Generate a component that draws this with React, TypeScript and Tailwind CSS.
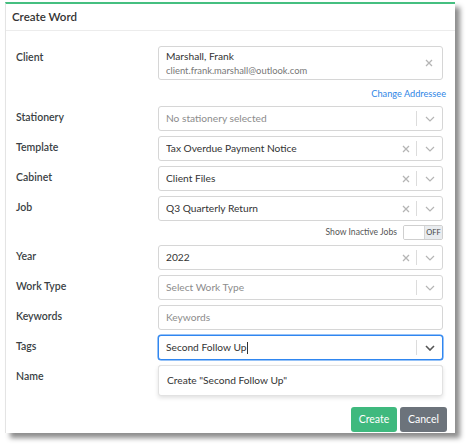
import React from 'react';

const font = "font-['Lato','Noto_Sans',sans-serif]";

function Clear() {
  return (
    <svg width="8" height="8" viewBox="0 0 8 8" className="shrink-0">
      <path d="M1 1 L7 7 M7 1 L1 7" stroke="#b5b5b5" strokeWidth="1.3" />
    </svg>
  );
}

function Chevron({ dark }: { dark?: boolean }) {
  return (
    <svg width="10" height="6" viewBox="0 0 10 6" className="shrink-0">
      <path d="M1 1 L5 5 L9 1" fill="none" stroke={dark ? '#555' : '#b5b5b5'} strokeWidth={dark ? 1.6 : 1.2} />
    </svg>
  );
}

function Select({ value, placeholder, clear = true, focused }: { value?: string; placeholder?: string; clear?: boolean; focused?: boolean }) {
  return (
    <div
      className={
        'h-[25px] flex items-center rounded-[3px] bg-white pl-[7px] ' +
        (focused ? 'border border-[#2f86f0] shadow-[0_0_0_0.5px_#2f86f0]' : 'border border-[#d6d6d6]')
      }
    >
      <div className={'flex-1 text-[10.2px] truncate ' + (value ? 'text-[#333]' : 'text-[#8c8c8c]')}>
        {value ?? placeholder}
        {focused && <span className="inline-block w-px h-[12px] bg-[#333] align-middle ml-px" />}
      </div>
      {clear && value && !focused && (
        <div className="w-[20px] flex justify-center">
          <Clear />
        </div>
      )}
      <div className="w-px h-[15px] bg-[#dcdcdc]" />
      <div className="w-[25px] flex justify-center">
        <Chevron dark={focused} />
      </div>
    </div>
  );
}

function Row({ label, children, className = '' }: { label: string; children: React.ReactNode; className?: string }) {
  return (
    <div className={'flex ' + className}>
      <div className="w-[142px] pt-[4px] text-[10.5px] font-semibold text-[#3a3f44]">{label}</div>
      <div className="flex-1 relative">{children}</div>
    </div>
  );
}

export default function App() {
  return (
    <div className={'w-[466px] h-[444px] bg-white overflow-hidden ' + font}>
      <div className="ml-[5px] mt-[2px] w-[450px] h-[431px] bg-white border-t-2 border-[#45bf80] border-l border-l-[#e4e4e4] shadow-[5px_5px_5px_rgba(0,0,0,0.45)] flex flex-col">
        <div className="h-[27px] flex items-center px-[6px] border-b border-[#ececec] text-[11.5px] font-semibold text-[#333]">
          Create Word
        </div>
        <div className="pl-[10px] pr-[12px] pt-[15px] flex flex-col">
          <Row label="Client">
            <div className="h-[34px] flex items-center rounded-[3px] border border-[#d6d6d6] pl-[7px]">
              <div className="flex-1 leading-none">
                <div className="text-[10.2px] text-[#333]">Marshall, Frank</div>
                <div className="text-[9.4px] text-[#777] mt-[5px]">client.frank.marshall@outlook.com</div>
              </div>
              <div className="w-[27px] flex justify-center">
                <Clear />
              </div>
            </div>
            <div className="h-[26px] flex items-center justify-end text-[9.2px] text-[#2f86e6] -mr-[3px] pt-px">
              Change Addressee
            </div>
          </Row>
          <div className="flex flex-col gap-[5px]">
            <Row label="Stationery">
              <Select placeholder="No stationery selected" />
            </Row>
            <Row label="Template">
              <Select value="Tax Overdue Payment Notice" />
            </Row>
            <Row label="Cabinet">
              <Select value="Client Files" />
            </Row>
            <Row label="Job">
              <Select value="Q3 Quarterly Return" />
              <div className="flex items-center justify-end gap-[6px] mt-[4px]">
                <span className="text-[8.6px] text-[#555]">Show Inactive Jobs</span>
                <div className="w-[40px] h-[15px] flex border border-[#cfcfcf] rounded-[2px] overflow-hidden">
                  <div className="flex-1 bg-white" />
                  <div className="w-[18px] bg-[#e9ecef] border-l border-[#d6d6d6] flex items-center justify-center text-[7.5px] text-[#444]">
                    OFF
                  </div>
                </div>
              </div>
            </Row>
            <Row label="Year">
              <Select value="2022" />
            </Row>
            <Row label="Work Type">
              <Select placeholder="Select Work Type" clear={false} />
            </Row>
            <Row label="Keywords">
              <div className="h-[25px] flex items-center rounded-[3px] border border-[#d6d6d6] pl-[7px] text-[10.2px] text-[#8c8c8c]">
                Keywords
              </div>
            </Row>
            <Row label="Tags" className="z-10">
              <Select value="Second Follow Up" focused />
              <div className="absolute left-0 right-0 top-full mt-[5px] h-[31px] flex items-center bg-white rounded-[3px] border border-[#e2e2e2] shadow-[0_2px_4px_rgba(0,0,0,0.12)] pl-[8px] text-[10.2px] text-[#333]">
                Create "Second Follow Up"
              </div>
            </Row>
            <Row label="Name">
              <div className="h-[25px] rounded-[3px] border border-[#d6d6d6]" />
            </Row>
          </div>
          <div className="flex justify-end gap-[3px] mt-[17px] -mr-[4px]">
            <button className="h-[25px] w-[46px] rounded-[3px] bg-[#3fb97e] text-white text-[10.5px]">Create</button>
            <button className="h-[25px] w-[47px] rounded-[3px] bg-[#6c737b] text-white text-[10.5px]">Cancel</button>
          </div>
        </div>
      </div>
    </div>
  );
}
